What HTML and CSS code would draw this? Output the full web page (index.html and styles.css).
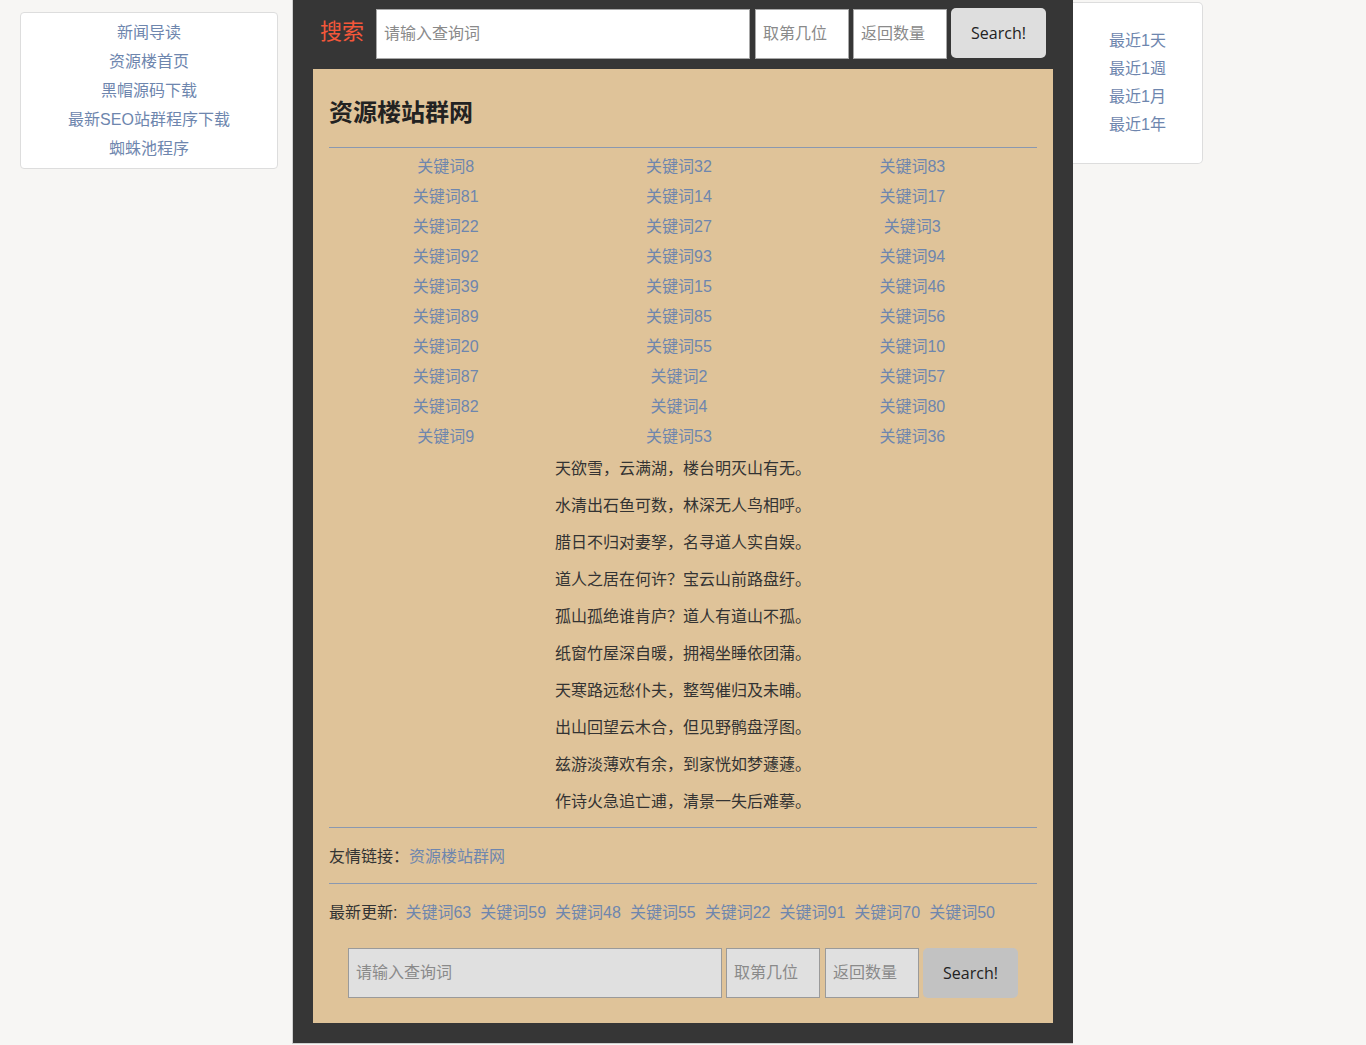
FILE: index.html
```html
<!DOCTYPE html>
<html lang="zh-CN">
<head>
<meta charset="utf-8">
<title>资源楼站群网</title>
<link rel="stylesheet" href="styles.css">
</head>
<body>
<div class="page">
  <aside class="left-nav">
    <a href="#">新闻导读</a>
    <a href="#">资源楼首页</a>
    <a href="#">黑帽源码下载</a>
    <a href="#">最新SEO站群程序下载</a>
    <a href="#">蜘蛛池程序</a>
  </aside>

  <main class="center">
    <form class="search top-search">
      <span class="search-label">搜索</span>
      <input class="q" type="text" placeholder="请输入查询词">
      <input class="n" type="text" placeholder="取第几位">
      <input class="n" type="text" placeholder="返回数量">
      <button type="button">Search!</button>
    </form>

    <section class="content">
      <h1 class="title">资源楼站群网</h1>
      <hr class="rule">
      <ul class="keywords">
        <li><a href="#">关键词8</a></li><li><a href="#">关键词32</a></li><li><a href="#">关键词83</a></li>
        <li><a href="#">关键词81</a></li><li><a href="#">关键词14</a></li><li><a href="#">关键词17</a></li>
        <li><a href="#">关键词22</a></li><li><a href="#">关键词27</a></li><li><a href="#">关键词3</a></li>
        <li><a href="#">关键词92</a></li><li><a href="#">关键词93</a></li><li><a href="#">关键词94</a></li>
        <li><a href="#">关键词39</a></li><li><a href="#">关键词15</a></li><li><a href="#">关键词46</a></li>
        <li><a href="#">关键词89</a></li><li><a href="#">关键词85</a></li><li><a href="#">关键词56</a></li>
        <li><a href="#">关键词20</a></li><li><a href="#">关键词55</a></li><li><a href="#">关键词10</a></li>
        <li><a href="#">关键词87</a></li><li><a href="#">关键词2</a></li><li><a href="#">关键词57</a></li>
        <li><a href="#">关键词82</a></li><li><a href="#">关键词4</a></li><li><a href="#">关键词80</a></li>
        <li><a href="#">关键词9</a></li><li><a href="#">关键词53</a></li><li><a href="#">关键词36</a></li>
      </ul>
      <div class="poem">
        <p>天欲雪，云满湖，楼台明灭山有无。</p>
        <p>水清出石鱼可数，林深无人鸟相呼。</p>
        <p>腊日不归对妻孥，名寻道人实自娱。</p>
        <p>道人之居在何许？宝云山前路盘纡。</p>
        <p>孤山孤绝谁肯庐？道人有道山不孤。</p>
        <p>纸窗竹屋深自暖，拥褐坐睡依团蒲。</p>
        <p>天寒路远愁仆夫，整驾催归及未晡。</p>
        <p>出山回望云木合，但见野鹘盘浮图。</p>
        <p>兹游淡薄欢有余，到家恍如梦蘧蘧。</p>
        <p>作诗火急追亡逋，清景一失后难摹。</p>
      </div>
      <hr class="rule">
      <div class="friends">友情链接：<a href="#">资源楼站群网</a></div>
      <hr class="rule">
      <div class="latest">
        <span>最新更新:</span>
        <a href="#">关键词63</a>
        <a href="#">关键词59</a>
        <a href="#">关键词48</a>
        <a href="#">关键词55</a>
        <a href="#">关键词22</a>
        <a href="#">关键词91</a>
        <a href="#">关键词70</a>
        <a href="#">关键词50</a>
      </div>
      <form class="search bottom-search">
        <input class="q" type="text" placeholder="请输入查询词">
        <input class="n" type="text" placeholder="取第几位">
        <input class="n" type="text" placeholder="返回数量">
        <button type="button">Search!</button>
      </form>
    </section>
  </main>

  <aside class="right-nav">
    <a href="#">最近1天</a>
    <a href="#">最近1週</a>
    <a href="#">最近1月</a>
    <a href="#">最近1年</a>
  </aside>
</div>
</body>
</html>
```

FILE: styles.css
```css
html, body {
  margin: 0;
  padding: 0;
}
body {
  background: #f7f6f4;
  font-family: "Liberation Sans", "Noto Sans CJK SC", sans-serif;
  font-size: 16px;
  color: #333;
}
a {
  color: #6e86ae;
  text-decoration: none;
}
.page {
  display: flex;
  align-items: flex-start;
}

/* left navigation */
.left-nav {
  margin: 12px 0 0 20px;
  width: 256px;
  padding: 5px 0 5px;
  background: #fff;
  border: 1px solid #ddd;
  border-radius: 4px;
  display: flex;
  flex-direction: column;
  align-items: center;
  line-height: 29px;
}

/* center column */
.center {
  margin-left: 14px;
  width: 780px;
  background: #363636;
  border-left: 1px solid #cfcfcf;
  border-bottom: 1px solid #cfcfcf;
  padding: 8px 0 20px;
  box-sizing: content-box;
}
.search {
  display: flex;
  align-items: center;
}
.search input {
  box-sizing: border-box;
  height: 50px;
  margin: 0;
  padding: 0 7px;
  border: 1px solid #a8a8a8;
  font-family: "Liberation Sans", "Noto Sans CJK SC", sans-serif;
  font-size: 16px;
  color: #333;
  outline: none;
}
.search input::placeholder {
  color: #8a8a8a;
}
.search .q {
  width: 374px;
}
.search .n {
  width: 94px;
}
.search button {
  box-sizing: border-box;
  width: 95px;
  height: 50px;
  border: none;
  border-radius: 5px;
  background: #dedede;
  font-family: "Open Sans", "Noto Sans", sans-serif;
  font-size: 16px;
  color: #222;
  padding: 0;
}
.top-search {
  gap: 4px;
}
.top-search .search-label {
  width: 83px;
  box-sizing: border-box;
  padding-left: 27px;
  margin-right: -4px;
  color: #f4573a;
  font-size: 22px;
  font-family: "Noto Sans CJK SC", sans-serif;
  line-height: 30px;
  margin-top: -10px;
}
.top-search .q {
  margin-right: 1px;
}
.top-search input {
  background: #fff;
  margin-top: 1px;
}
.top-search button {
  margin-top: -1px;
}

/* beige content box */
.content {
  margin: 10px 20px 0;
  background: #dfc399;
  padding: 0 16px 25px;
}
.title {
  margin: 0;
  padding-top: 26px;
  font-size: 24px;
  line-height: 32px;
  font-weight: bold;
  color: #222;
  font-family: "Noto Sans CJK SC", sans-serif;
}
.rule {
  margin: 0;
  border: none;
  border-top: 1px solid #8a98b0;
  height: 0;
}
.title + .rule {
  margin-top: 20px;
}
.keywords {
  list-style: none;
  margin: 4px 0 0;
  padding: 0;
  width: 700px;
  display: grid;
  grid-template-columns: repeat(3, 1fr);
}
.keywords li {
  text-align: center;
  line-height: 30px;
}
.poem {
  padding-top: 6px;
  text-align: center;
}
.poem p {
  margin: 0 0 16px;
  line-height: 21px;
}
.poem p:last-child {
  margin-bottom: 15px;
}
.friends {
  padding: 18px 0 16px;
  line-height: 21px;
}
.latest {
  padding: 18px 0 0;
  line-height: 21px;
  display: flex;
  gap: 9px;
}
.latest span {
  margin-right: -1px;
}
.bottom-search {
  margin: 25px 0 0 19px;
  gap: 4px;
}
.bottom-search input {
  background: #e0e0e0;
  border-color: #9a9a9a;
}
.bottom-search .n + .n {
  margin-left: 1px;
}
.bottom-search button {
  background: #c2c2c2;
}

/* right navigation */
.right-nav {
  margin-top: 2px;
  width: 130px;
  background: #fff;
  border: 1px solid #ddd;
  border-left: none;
  border-radius: 0 5px 5px 0;
  padding: 24px 0 24px 36px;
  box-sizing: border-box;
  display: flex;
  flex-direction: column;
  line-height: 28px;
}
```
